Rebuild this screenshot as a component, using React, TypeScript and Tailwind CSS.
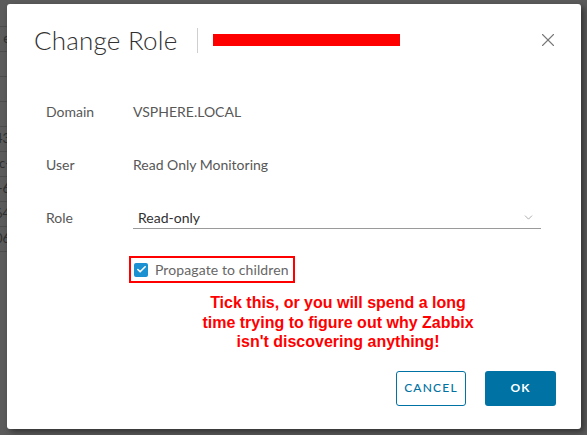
import { Check, ChevronDown, X } from 'lucide-react';

const bgRows = [
  { h: 'h-[27px]', t: '' },
  { h: 'h-[25px]', t: 'e' },
  { h: 'h-[25px]', t: '' },
  { h: 'h-[25px]', t: '' },
  { h: 'h-[25px]', t: '' },
  { h: 'h-[25px]', t: '43' },
  { h: 'h-[25px]', t: 'c-' },
  { h: 'h-[25px]', t: '-6' },
  { h: 'h-[25px]', t: '64' },
  { h: 'h-[25px]', t: '06' },
];

function InfoRow({ label, children }: { label: string; children: React.ReactNode }) {
  return (
    <div className="flex h-[53px] items-center">
      <div className="w-[87px] text-[14px] text-[#575757]">{label}</div>
      {children}
    </div>
  );
}

export default function App() {
  return (
    <div className="relative h-[435px] w-[587px] overflow-hidden bg-[#5b5b5b] font-['Lato','Noto_Sans',sans-serif]">
      {/* table behind the modal, only a sliver shows */}
      <div className="flex w-[7px] flex-col overflow-hidden">
        {bgRows.map((r, i) => (
          <div
            key={i}
            className={`${r.h} flex items-center justify-end border-b border-[#4c4c4c] text-[13px] text-[#2f2f2f]`}
          >
            <span className="-mr-[3px]">{r.t}</span>
          </div>
        ))}
      </div>

      <div className="absolute left-[7px] top-[4px] h-[425px] w-[574px] rounded-[3px] bg-white shadow-[3px_3px_6px_rgba(0,0,0,0.45)]">
        {/* header */}
        <div className="mt-[22px] flex h-[28px] items-center pl-[27px] pr-[22px]">
          <h1 className="text-[26px] font-light leading-none tracking-[0.2px] text-[#313131]">Change Role</h1>
          <div className="ml-[20px] h-[25px] w-px bg-[#cfcfcf]" />
          <div className="ml-[15px] h-[12px] w-[187px] bg-[#ff0000]" />
          <button className="ml-auto text-[#777]">
            <X size={22} strokeWidth={1.2} />
          </button>
        </div>

        {/* body */}
        <div className="mt-[31px] pl-[39px] pr-[40px]">
          <InfoRow label="Domain">
            <span className="text-[14px] text-[#575757]">VSPHERE.LOCAL</span>
          </InfoRow>
          <InfoRow label="User">
            <span className="text-[14px] text-[#575757]">Read Only Monitoring</span>
          </InfoRow>
          <InfoRow label="Role">
            <div className="flex h-[23px] flex-1 items-center border-b border-[#9a9a9a] pl-[5px] pr-[6px]">
              <span className="text-[14px] text-[#313131]">Read-only</span>
              <ChevronDown size={13} strokeWidth={1.3} className="ml-auto text-[#8a8a8a]" />
            </div>
          </InfoRow>

          <div className="ml-[83px] mt-[12px] flex h-[27px] w-[166px] items-center border-2 border-[#ff0000] pl-[3px]">
            <div className="flex h-[14px] w-[14px] items-center justify-center rounded-[2px] bg-[#1b91d2]">
              <Check size={11} strokeWidth={3.5} className="text-white" />
            </div>
            <span className="ml-[7px] text-[14px] tracking-[0.1px] text-[#666]">Propagate to children</span>
          </div>
        </div>

        <div className="ml-[176px] mt-[10px] w-[310px] text-center font-['Liberation_Sans',Arial,sans-serif] text-[16px] font-bold leading-[19.5px] text-[#ff0000]">
          Tick this, or you will spend a long
          <br />
          time trying to figure out why Zabbix
          <br />
          isn't discovering anything!
        </div>

        <div className="mt-[19px] flex justify-end gap-[19px] pr-[25px]">
          <button className="h-[35px] w-[70px] rounded-[3px] border border-[#0072a3] text-[12px] font-medium tracking-[1.2px] text-[#0072a3]">
            CANCEL
          </button>
          <button className="h-[35px] w-[71px] rounded-[3px] bg-[#0072a3] text-[12px] font-bold tracking-[1px] text-white">
            OK
          </button>
        </div>
      </div>
    </div>
  );
}
